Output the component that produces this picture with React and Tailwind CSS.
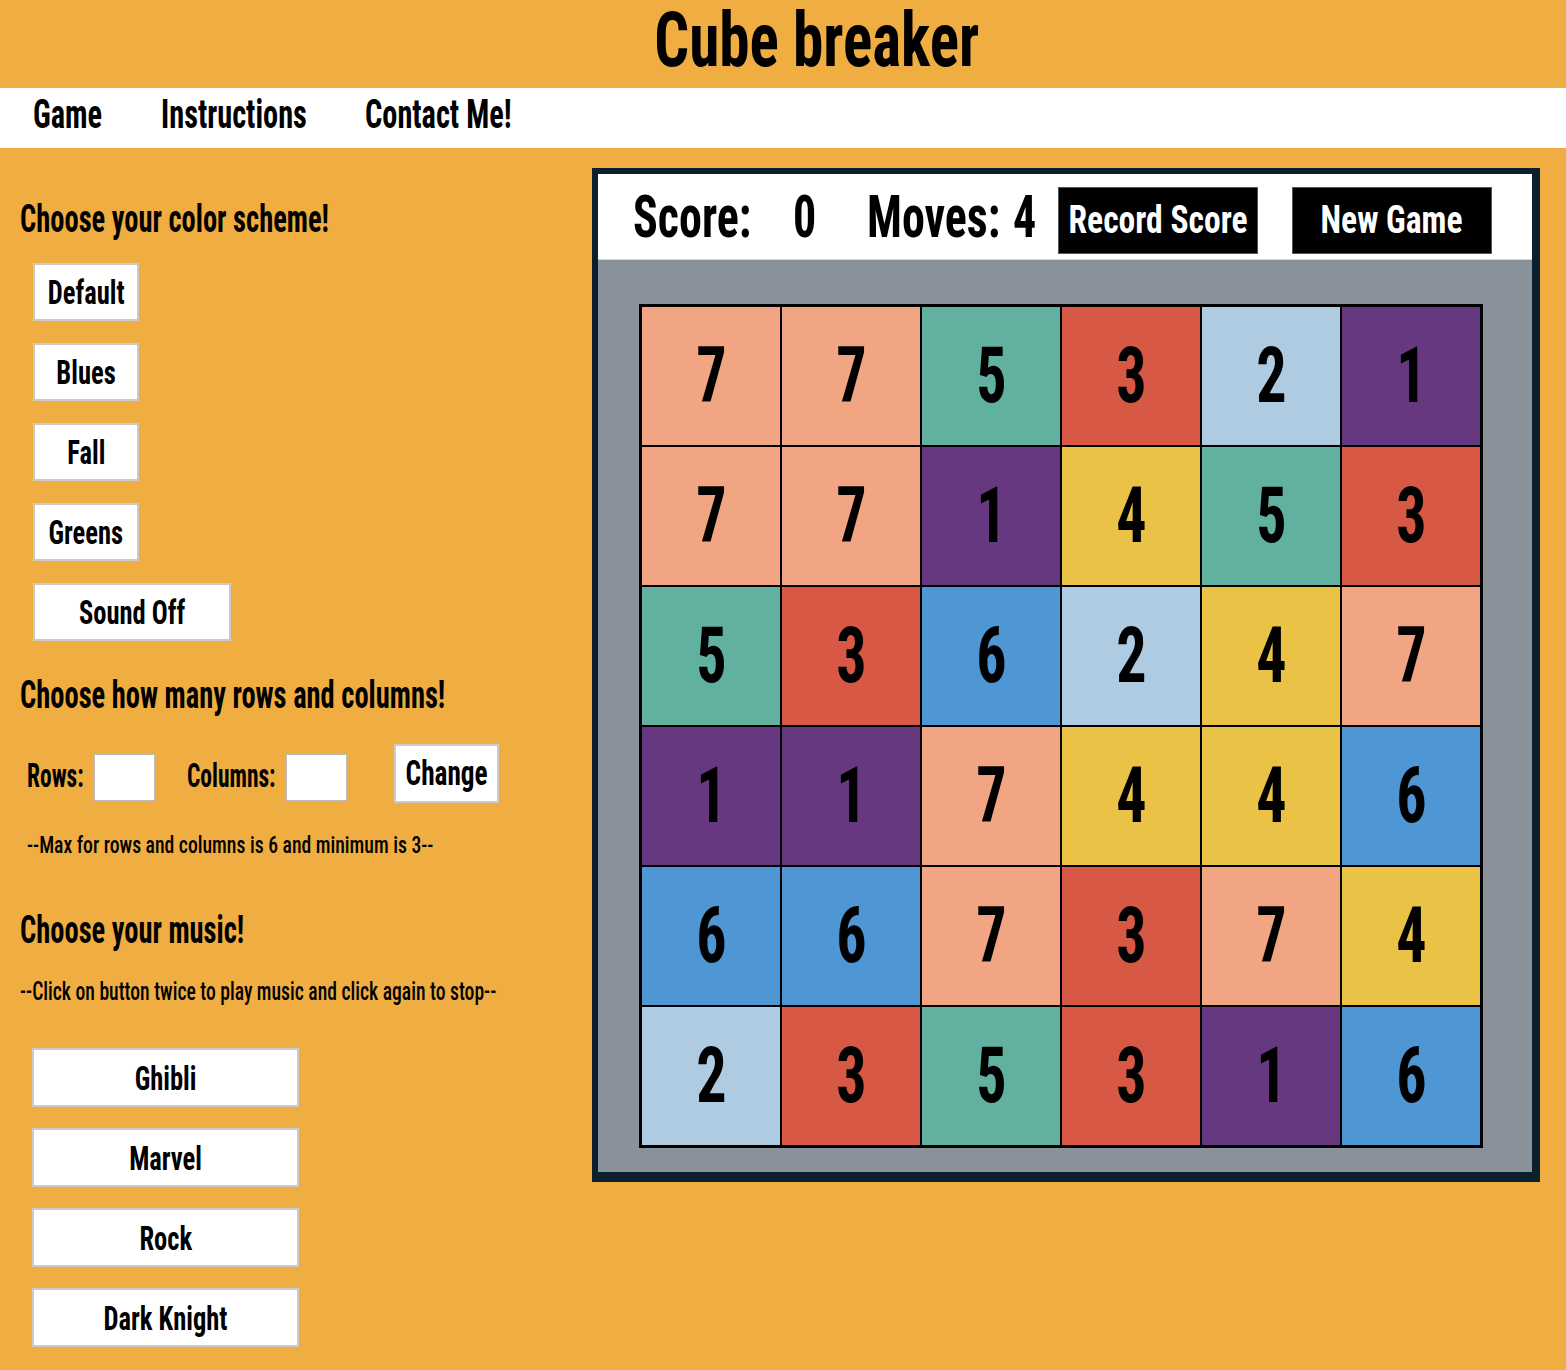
const GRID = [
  [7, 7, 5, 3, 2, 1],
  [7, 7, 1, 4, 5, 3],
  [5, 3, 6, 2, 4, 7],
  [1, 1, 7, 4, 4, 6],
  [6, 6, 7, 3, 7, 4],
  [2, 3, 5, 3, 1, 6],
];

const COLORS = {
  1: "bg-[#65387f]",
  2: "bg-[#afcbe2]",
  3: "bg-[#d75844]",
  4: "bg-[#e9c246]",
  5: "bg-[#62b09f]",
  6: "bg-[#4f96d4]",
  7: "bg-[#f2a582]",
};

function T({ children, className, s = "scale-x-[0.78]" }) {
  return (
    <span className={"inline-block whitespace-nowrap leading-none " + s + " " + className}>
      {children}
    </span>
  );
}

function Btn({ label, className }) {
  return (
    <button
      className={
        "flex items-center justify-center border-2 border-[#cbcbcb] bg-white text-black " + className
      }
    >
      <T className="origin-center text-[34px] font-bold">{label}</T>
    </button>
  );
}

function Heading({ children, className }) {
  return (
    <div className={"flex h-[40px] items-center pl-5 " + className}>
      <T s="scale-x-[0.75]" className="origin-left text-[38px] font-bold">
        {children}
      </T>
    </div>
  );
}

export default function App() {
  return (
    <div className="min-h-[1370px] bg-[#f0ad41] font-['Roboto_Condensed','Open_Sans',sans-serif] text-black">
      <header className="flex h-[88px] items-center justify-center pb-2 pl-[67px]">
        <T s="scale-x-[0.805]" className="origin-center text-[76px] font-bold">
          Cube breaker
        </T>
      </header>

      <nav className="flex h-[60px] items-center bg-white pb-2 pl-[33px]">
        <div className="w-[128px]">
          <T s="scale-x-[0.74]" className="origin-left text-[41px] font-bold">
            Game
          </T>
        </div>
        <div className="w-[204px]">
          <T s="scale-x-[0.74]" className="origin-left text-[41px] font-bold">
            Instructions
          </T>
        </div>
        <div>
          <T s="scale-x-[0.74]" className="origin-left text-[41px] font-bold">
            Contact Me!
          </T>
        </div>
      </nav>

      <main className="flex items-start">
        <aside className="flex w-[592px] flex-col">
          <Heading className="mt-[51px]">Choose your color scheme!</Heading>
          <div className="ml-[33px] mt-[24px] flex flex-col gap-[22px]">
            <Btn label="Default" className="h-[58px] w-[106px]" />
            <Btn label="Blues" className="h-[58px] w-[106px]" />
            <Btn label="Fall" className="h-[58px] w-[106px]" />
            <Btn label="Greens" className="h-[58px] w-[106px]" />
            <Btn label="Sound Off" className="h-[58px] w-[198px]" />
          </div>

          <Heading className="mt-[34px]">Choose how many rows and columns!</Heading>

          <div className="ml-[27px] mt-[29px] flex items-start">
            <div className="mt-[11px] flex h-[40px] w-[67px] items-center">
              <T s="scale-x-[0.69]" className="origin-left text-[34px] font-bold">
                Rows:
              </T>
            </div>
            <input className="mt-[10px] h-[47px] w-[61px] border border-[#bdbdbd] bg-white" />
            <div className="ml-[32px] mt-[11px] flex h-[40px] w-[99px] items-center">
              <T s="scale-x-[0.69]" className="origin-left text-[34px] font-bold">
                Columns:
              </T>
            </div>
            <input className="mt-[10px] h-[47px] w-[61px] border border-[#bdbdbd] bg-white" />
            <button className="ml-[47px] flex h-[59px] w-[105px] items-center justify-center border-2 border-[#cbcbcb] bg-white">
              <T className="origin-center text-[35px] font-bold">Change</T>
            </button>
          </div>

          <div className="ml-[27px] mt-[30px] flex h-[24px] items-center">
            <T s="scale-x-[0.82]" className="origin-left text-[24px] font-medium">
              --Max for rows and columns is 6 and minimum is 3--
            </T>
          </div>

          <Heading className="mt-[53px]">Choose your music!</Heading>

          <div className="ml-5 mt-[28px] flex h-[26px] items-center">
            <T s="scale-x-[0.785]" className="origin-left text-[25px] font-medium">
              --Click on button twice to play music and click again to stop--
            </T>
          </div>

          <div className="ml-[32px] mt-[44px] flex flex-col gap-[21px]">
            <Btn label="Ghibli" className="h-[59px] w-[267px]" />
            <Btn label="Marvel" className="h-[59px] w-[267px]" />
            <Btn label="Rock" className="h-[59px] w-[267px]" />
            <Btn label="Dark Knight" className="h-[59px] w-[267px]" />
          </div>
        </aside>

        <section className="mt-5 bg-[#0b1f2f] pb-[10px] pl-[6px] pr-[8px] pt-[6px]">
          <div className="flex h-[86px] w-[934px] items-center border-b border-[#d4d4d4] bg-white pl-[35px]">
            <div className="w-[160px]">
              <T className="origin-left text-[59px] font-bold">Score:</T>
            </div>
            <div className="w-[74px]">
              <T className="origin-left text-[59px] font-bold">0</T>
            </div>
            <div className="w-[146px]">
              <T className="origin-left text-[59px] font-bold">Moves:</T>
            </div>
            <div className="w-[45px]">
              <T className="origin-left text-[59px] font-bold">4</T>
            </div>
            <button className="mt-[7px] flex h-[67px] w-[200px] items-center justify-center border border-[#555] bg-black text-white">
              <T s="scale-x-[0.86]" className="origin-center text-[39px] font-bold">
                Record Score
              </T>
            </button>
            <button className="ml-[34px] mt-[7px] flex h-[67px] w-[200px] items-center justify-center border border-[#555] bg-black text-white">
              <T s="scale-x-[0.86]" className="origin-center text-[39px] font-bold">
                New Game
              </T>
            </button>
          </div>

          <div className="h-[912px] w-[934px] bg-[#89929b] pl-[41px] pt-[44px]">
            <div className="grid w-fit grid-cols-6 border-2 border-black">
              {GRID.flat().map((n, i) => (
                <div
                  key={i}
                  className={"flex h-[140px] w-[140px] items-center justify-center border border-black " + COLORS[n]}
                >
                  <T className="origin-center text-[77px] font-bold">{n}</T>
                </div>
              ))}
            </div>
          </div>
        </section>
      </main>
    </div>
  );
}
